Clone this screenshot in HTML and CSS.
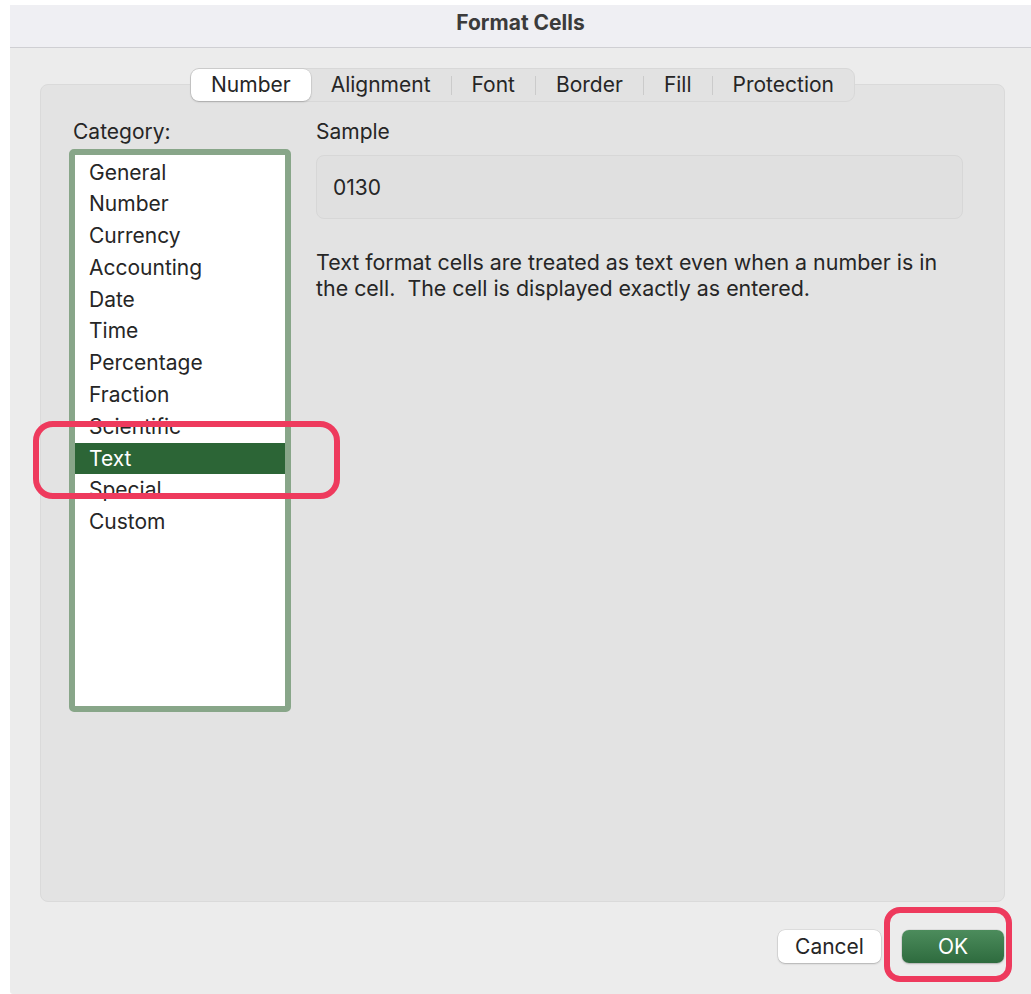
FILE: index.html
```html
<!DOCTYPE html>
<html lang="en">
<head>
<meta charset="utf-8">
<title>Format Cells</title>
<link rel="stylesheet" href="styles.css">
</head>
<body>
<div class="window">
  <header class="titlebar">Format Cells</header>
  <main class="content">
    <nav class="tabs">
      <span class="tab active">Number</span>
      <span class="tab">Alignment</span>
      <i class="divider"></i>
      <span class="tab">Font</span>
      <i class="divider"></i>
      <span class="tab">Border</span>
      <i class="divider"></i>
      <span class="tab">Fill</span>
      <i class="divider"></i>
      <span class="tab">Protection</span>
    </nav>
    <section class="panel">
      <div class="col-left">
        <div class="label">Category:</div>
        <ul class="list">
          <li>General</li>
          <li>Number</li>
          <li>Currency</li>
          <li>Accounting</li>
          <li>Date</li>
          <li>Time</li>
          <li>Percentage</li>
          <li>Fraction</li>
          <li>Scientific</li>
          <li class="selected">Text</li>
          <li>Special</li>
          <li>Custom</li>
        </ul>
      </div>
      <div class="col-right">
        <div class="label">Sample</div>
        <div class="sample">0130</div>
        <p class="desc">Text format cells are treated as text even when a number is in<br>the cell.&nbsp; The cell is displayed exactly as entered.</p>
      </div>
    </section>
    <footer class="buttons">
      <button class="btn">Cancel</button>
      <button class="btn primary">OK</button>
    </footer>
  </main>
  <div class="callout callout-text"></div>
  <div class="callout callout-ok"></div>
</div>
</body>
</html>
```

FILE: styles.css
```css
* {
  box-sizing: border-box;
}

body {
  margin: 0;
  background: #ffffff;
  font-family: Inter, "Liberation Sans", "Noto Sans", sans-serif;
  color: #262626;
  overflow: hidden;
}

.window {
  position: relative;
  margin: 5px 0 0 10px;
  width: 1021px;
  height: 989px;
  background: #ececec;
  border-top-left-radius: 3px;
  border-bottom-left-radius: 3px;
}

.titlebar {
  height: 43px;
  border-bottom: 1px solid #cfcfd3;
  background: #efeff3;
  display: flex;
  align-items: center;
  justify-content: center;
  font-weight: 700;
  font-size: 21px;
  color: #3b3b3b;
  padding-bottom: 8px;
}

.content {
  padding: 20px 26px 0 30px;
}

/* segmented tab control sitting on the panel's top edge */
.tabs {
  position: relative;
  z-index: 1;
  display: flex;
  align-items: center;
  width: max-content;
  height: 34px;
  margin: 0 auto -18px;
  background: #e2e2e2;
  border: 1px solid #d8d8d8;
  border-radius: 9px;
  font-size: 21px;
}

.tab {
  padding: 0 20px;
  line-height: 32px;
  height: 32px;
  color: #262626;
}

.tab.active {
  background: #ffffff;
  border-radius: 8px;
  box-shadow: 0 0 0 0.5px rgba(0, 0, 0, 0.1), 0 1px 2px rgba(0, 0, 0, 0.18);
}

.divider {
  width: 1px;
  height: 19px;
  background: #cbcbcb;
}

.panel {
  height: 818px;
  background: #e3e3e3;
  border: 1px solid #dadada;
  border-radius: 8px;
  padding: 34px 0 0 28px;
  display: grid;
  grid-template-columns: 222px 647px;
  column-gap: 25px;
  align-items: start;
}

.label {
  font-size: 21px;
  line-height: 26px;
  padding-left: 4px;
}

.col-right .label {
  padding-left: 0;
}

.list {
  list-style: none;
  margin: 4px 0 0;
  padding: 1.5px 0 0;
  height: 563px;
  background: #ffffff;
  border: 6px solid #88a689;
  border-radius: 5px;
  font-size: 21px;
}

.list li {
  height: 31.8px;
  line-height: 31.8px;
  padding-left: 14px;
  white-space: nowrap;
}

.list li.selected {
  background: #2c6536;
  color: #ffffff;
}

.sample {
  margin-top: 10px;
  height: 64px;
  width: 647px;
  background: #e0e0e0;
  border: 1px solid #d7d7d7;
  border-radius: 8px;
  padding-left: 16px;
  display: flex;
  align-items: center;
  font-size: 21px;
}

.desc {
  margin: 30px 0 0;
  font-size: 21.4px;
  line-height: 26px;
}

.buttons {
  display: flex;
  justify-content: flex-end;
  gap: 21px;
  margin-top: 28px;
  padding-right: 1px;
}

.btn {
  height: 33px;
  width: 103px;
  border: none;
  border-radius: 7px;
  background: #ffffff;
  box-shadow: 0 0 0 0.5px rgba(0, 0, 0, 0.12), 0 1px 2px rgba(0, 0, 0, 0.2);
  font-family: inherit;
  font-size: 21px;
  color: #262626;
  padding: 0;
}

.btn.primary {
  width: 102px;
  background: linear-gradient(#4c8c5c, #2e6b3e);
  color: #ffffff;
}

/* red annotation frames drawn over the dialog */
.callout {
  position: absolute;
  border: 6px solid #ee3a5d;
}

.callout-text {
  left: 23px;
  top: 416px;
  width: 307px;
  height: 78px;
  border-radius: 20px;
}

.callout-ok {
  left: 874px;
  top: 902px;
  width: 128px;
  height: 75px;
  border-radius: 16px;
}
```
